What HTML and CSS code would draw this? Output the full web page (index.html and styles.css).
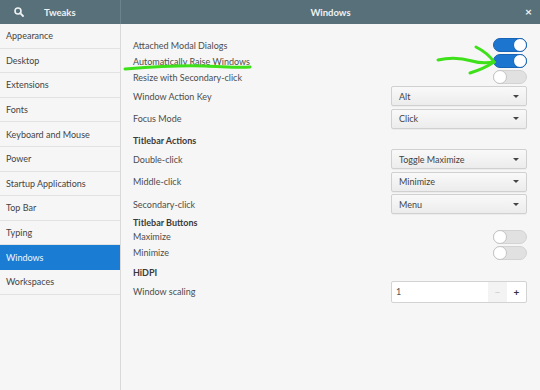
FILE: index.html
```html
<!DOCTYPE html>
<html lang="en">
<head>
    <meta charset="UTF-8">
    <meta name="viewport" content="width=device-width, initial-scale=1.0">
    <title>Tweaks</title>
    <link rel="stylesheet" href="styles.css">
</head>
<body>
    <div class="window">
        <div class="headerbar">
            <div class="header-side">
                <svg class="search-icon" width="10" height="10" viewBox="0 0 10 10">
                    <circle cx="4" cy="4" r="3" fill="none" stroke="#eef2f3" stroke-width="1.6"/>
                    <line x1="6.2" y1="6.2" x2="9" y2="9" stroke="#eef2f3" stroke-width="1.8" stroke-linecap="round"/>
                </svg>
                <span class="app-title">Tweaks</span>
            </div>
            <div class="header-main">
                <span class="page-title">Windows</span>
                <span class="close">&times;</span>
            </div>
        </div>

        <div class="body">
            <ul class="sidebar">
                <li>Appearance</li>
                <li>Desktop</li>
                <li>Extensions</li>
                <li>Fonts</li>
                <li>Keyboard and Mouse</li>
                <li>Power</li>
                <li>Startup Applications</li>
                <li>Top Bar</li>
                <li>Typing</li>
                <li class="active">Windows</li>
                <li>Workspaces</li>
            </ul>

            <div class="content">
                <div class="row switch-row">
                    <span>Attached Modal Dialogs</span>
                    <span class="switch on"></span>
                </div>
                <div class="row switch-row">
                    <span>Automatically Raise Windows</span>
                    <span class="switch on"></span>
                </div>
                <div class="row switch-row">
                    <span>Resize with Secondary-click</span>
                    <span class="switch"></span>
                </div>
                <div class="row combo-row">
                    <span>Window Action Key</span>
                    <div class="combo">Alt<span class="caret"></span></div>
                </div>
                <div class="row combo-row">
                    <span>Focus Mode</span>
                    <div class="combo">Click<span class="caret"></span></div>
                </div>

                <div class="section-title first">Titlebar Actions</div>
                <div class="row combo-row">
                    <span>Double-click</span>
                    <div class="combo">Toggle Maximize<span class="caret"></span></div>
                </div>
                <div class="row combo-row">
                    <span>Middle-click</span>
                    <div class="combo">Minimize<span class="caret"></span></div>
                </div>
                <div class="row combo-row">
                    <span>Secondary-click</span>
                    <div class="combo">Menu<span class="caret"></span></div>
                </div>

                <div class="section-title tight">Titlebar Buttons</div>
                <div class="row switch-row">
                    <span>Maximize</span>
                    <span class="switch"></span>
                </div>
                <div class="row switch-row">
                    <span>Minimize</span>
                    <span class="switch"></span>
                </div>

                <div class="section-title hidpi">HiDPI</div>
                <div class="row spin-row">
                    <span>Window scaling</span>
                    <div class="spin">
                        <span class="spin-value">1</span>
                        <span class="spin-btn minus">&minus;</span>
                        <span class="spin-btn plus">+</span>
                    </div>
                </div>
            </div>
        </div>

        <!-- hand drawn marks on the screenshot -->
        <svg class="scribble" width="540" height="390" viewBox="0 0 540 390">
            <path d="M125 69 C 150 67, 180 65, 205 66 S 240 68, 250 67" />
            <path d="M438 60 C 450 57, 462 58, 472 61 S 488 63, 494 62" />
            <path d="M476 47 C 484 51, 490 56, 494 62" />
            <path d="M470 73 C 480 70, 488 66, 494 62" />
        </svg>
    </div>
</body>
</html>
```

FILE: styles.css
```css
* {
    box-sizing: border-box;
    margin: 0;
    padding: 0;
}
body {
    font-family: 'Lato', 'Open Sans', sans-serif;
    font-size: 9px;
    background-color: #f6f6f6;
    color: #4d4d4d;
}
.window {
    width: 540px;
    height: 390px;
    position: relative;
    display: flex;
    flex-direction: column;
}

/* header */
.headerbar {
    height: 24px;
    display: flex;
    background-color: #57707a;
    color: #eef2f3;
    font-weight: bold;
    font-size: 9.5px;
}
.header-side {
    width: 121px;
    display: flex;
    align-items: center;
    border-right: 1px solid #6c838c;
}
.search-icon {
    margin-left: 14px;
}
.app-title {
    margin-left: 20px;
}
.header-main {
    flex: 1;
    display: flex;
    align-items: center;
    justify-content: center;
    position: relative;
}
.close {
    position: absolute;
    right: 8px;
    top: 4px;
    font-size: 12px;
}

/* body */
.body {
    flex: 1;
    display: flex;
}
.sidebar {
    list-style: none;
    width: 121px;
    background-color: #f6f6f6;
    border-right: 1px solid #d9d9d9;
}
.sidebar li {
    height: 24.6px;
    display: flex;
    align-items: center;
    padding-left: 6px;
    border-bottom: 1px solid #e2e2e2;
    color: #444;
}
.sidebar li.active {
    background-color: #1b7cd4;
    color: #f2f7fc;
    border-bottom-color: #1b7cd4;
}

.content {
    flex: 1;
    padding: 13px 13px 0 12px;
    display: flex;
    flex-direction: column;
}
.row {
    display: flex;
    align-items: center;
    justify-content: space-between;
}
.switch-row {
    height: 16px;
}
.combo-row {
    height: 22.4px;
}
.spin-row {
    height: 22px;
}
.section-title {
    display: flex;
    align-items: center;
    font-weight: bold;
    color: #3a3a3a;
}
.section-title.first {
    height: 18.4px;
    padding-top: 3px;
}
.section-title.tight {
    height: 13.4px;
}
.section-title.hidpi {
    height: 20.2px;
    padding-top: 3px;
}

/* switches */
.switch {
    width: 34px;
    height: 14px;
    border-radius: 7px;
    background-color: #e1e1e1;
    border: 1px solid #d3d3d3;
    position: relative;
}
.switch::after {
    content: '';
    position: absolute;
    top: -1px;
    left: -1px;
    width: 14px;
    height: 14px;
    border-radius: 50%;
    background-color: #fff;
    border: 1px solid #c4c4c4;
    box-sizing: border-box;
}
.switch.on {
    background-color: #1c76cf;
    border-color: #1864b4;
}
.switch.on::after {
    left: auto;
    right: -1px;
    border-color: #1864b4;
}

/* combos */
.combo {
    width: 136px;
    height: 20px;
    border: 1px solid #d0d0d0;
    border-radius: 2px;
    background: linear-gradient(#f9f9f9, #ececec);
    display: flex;
    align-items: center;
    justify-content: space-between;
    padding: 0 7px;
    color: #444;
    box-shadow: 0 1px 0 rgba(0, 0, 0, .04);
}
.caret {
    width: 0;
    height: 0;
    border-left: 3px solid transparent;
    border-right: 3px solid transparent;
    border-top: 3px solid #444;
}

/* spin button */
.spin {
    width: 136px;
    height: 22px;
    border: 1px solid #d3d3d3;
    border-radius: 2px;
    background-color: #fff;
    display: flex;
    align-items: stretch;
}
.spin-value {
    flex: 1;
    display: flex;
    align-items: center;
    padding-left: 4px;
    color: #555;
}
.spin-btn {
    width: 19px;
    display: flex;
    align-items: center;
    justify-content: center;
    font-size: 10px;
}
.spin-btn.minus {
    background-color: #f3f3f3;
    color: #c8c8c8;
}
.spin-btn.plus {
    color: #333;
    font-weight: bold;
}

.scribble {
    position: absolute;
    left: 0;
    top: 0;
    pointer-events: none;
}
.scribble path {
    fill: none;
    stroke: #3ee01a;
    stroke-width: 3;
    stroke-linecap: round;
}
```
